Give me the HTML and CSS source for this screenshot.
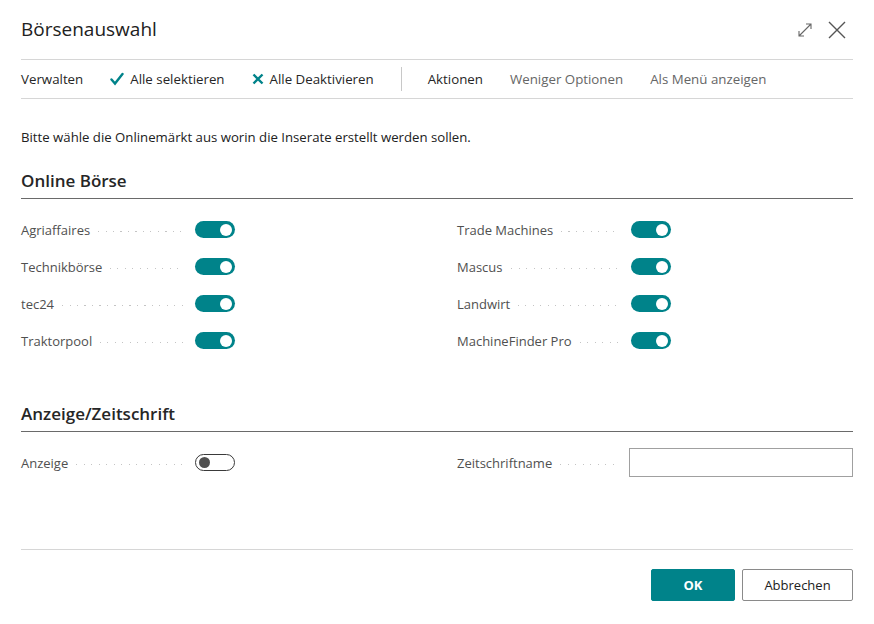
FILE: index.html
```html
<!DOCTYPE html>
<html lang="de">
<head>
<meta charset="utf-8">
<title>Börsenauswahl</title>
<link rel="stylesheet" href="styles.css">
</head>
<body>
<div class="dialog">
  <header class="head">
    <h1 class="title">Börsenauswahl</h1>
    <div class="head-icons">
      <svg class="ico-expand" width="16" height="16" viewBox="0 0 16 16" fill="none" stroke="#666" stroke-width="1.1">
        <path d="M2 14 L14 2 M9 2 H14 V7 M2 9 V14 H7"/>
      </svg>
      <svg class="ico-close" width="18" height="18" viewBox="0 0 18 18" fill="none" stroke="#555" stroke-width="1.4">
        <path d="M1 1 L17 17 M17 1 L1 17"/>
      </svg>
    </div>
  </header>

  <nav class="toolbar">
    <span class="tb-item">Verwalten</span>
    <span class="tb-item tb-icon">
      <svg width="14" height="14" viewBox="0 0 14 14" fill="none" stroke="#00838a" stroke-width="2.4" stroke-linecap="round"><path d="M1.5 7.5 L5 11.5 L12.5 2"/></svg>
      Alle selektieren
    </span>
    <span class="tb-item tb-icon">
      <svg width="12" height="12" viewBox="0 0 12 12" fill="none" stroke="#00838a" stroke-width="2.4"><path d="M1.5 1.5 L10.5 10.5 M10.5 1.5 L1.5 10.5"/></svg>
      Alle Deaktivieren
    </span>
    <span class="tb-sep"></span>
    <span class="tb-item">Aktionen</span>
    <span class="tb-item muted">Weniger Optionen</span>
    <span class="tb-item muted">Als Menü anzeigen</span>
  </nav>

  <p class="intro">Bitte wähle die Onlinemärkt aus worin die Inserate erstellt werden sollen.</p>

  <section class="group">
    <h2 class="group-title">Online Börse</h2>
    <div class="fields">
      <div class="col">
        <div class="field"><span class="label"><span class="lt">Agriaffaires</span><span class="leader"></span></span><span class="toggle on"></span></div>
        <div class="field"><span class="label"><span class="lt">Technikbörse</span><span class="leader"></span></span><span class="toggle on"></span></div>
        <div class="field"><span class="label"><span class="lt">tec24</span><span class="leader"></span></span><span class="toggle on"></span></div>
        <div class="field"><span class="label"><span class="lt">Traktorpool</span><span class="leader"></span></span><span class="toggle on"></span></div>
      </div>
      <div class="col">
        <div class="field"><span class="label"><span class="lt">Trade Machines</span><span class="leader"></span></span><span class="toggle on"></span></div>
        <div class="field"><span class="label"><span class="lt">Mascus</span><span class="leader"></span></span><span class="toggle on"></span></div>
        <div class="field"><span class="label"><span class="lt">Landwirt</span><span class="leader"></span></span><span class="toggle on"></span></div>
        <div class="field"><span class="label"><span class="lt">MachineFinder Pro</span><span class="leader"></span></span><span class="toggle on"></span></div>
      </div>
    </div>
  </section>

  <section class="group group2">
    <h2 class="group-title">Anzeige/Zeitschrift</h2>
    <div class="fields">
      <div class="col">
        <div class="field"><span class="label"><span class="lt">Anzeige</span><span class="leader"></span></span><span class="toggle off"></span></div>
      </div>
      <div class="col">
        <div class="field"><span class="label label-input"><span class="lt">Zeitschriftname</span><span class="leader"></span></span><input class="text-input" type="text"></div>
      </div>
    </div>
  </section>

  <footer class="foot">
    <button class="btn btn-primary">OK</button>
    <button class="btn">Abbrechen</button>
  </footer>
</div>
</body>
</html>
```

FILE: styles.css
```css
* { box-sizing: border-box; }
html, body { margin: 0; padding: 0; background: #fff; }
body {
  font-family: "Open Sans", "Noto Sans", sans-serif;
  color: #212121;
  width: 874px;
  height: 624px;
  overflow: hidden;
}
.dialog {
  padding: 0 21px;
  display: flex;
  flex-direction: column;
  height: 624px;
}
.head {
  display: flex;
  align-items: center;
  justify-content: space-between;
  height: 60px;
  border-bottom: 1px solid #d6d6d6;
}
.title {
  margin: 0;
  font-size: 19px;
  font-weight: 400;
  color: #212121;
  padding-bottom: 1px;
}
.head-icons {
  display: flex;
  align-items: center;
  gap: 15px;
  padding-right: 7px;
  padding-top: 1px;
}
.toolbar {
  display: flex;
  align-items: center;
  height: 39px;
  border-bottom: 1px solid #d6d6d6;
  font-size: 13.3px;
}
.tb-item { color: #262626; margin-right: 27px; white-space: nowrap; display: inline-flex; align-items: center; }
.tb-icon svg { margin-right: 6px; }
.tb-item.muted { color: #666; }
.tb-sep { width: 1px; height: 24px; background: #c8c8c8; margin: 0 26px 0 0; }
.intro {
  margin: 29px 0 0;
  font-size: 13.2px;
  color: #212121;
  line-height: 18px;
}
.group { margin-top: 23px; }
.group2 { margin-top: 43px; }
.group-title {
  margin: 0;
  font-size: 17px;
  font-weight: 600;
  color: #262626;
  padding-bottom: 5px;
  border-bottom: 1px solid #6a6a6a;
  line-height: 24px;
}
.fields {
  display: grid;
  grid-template-columns: 436px 1fr;
  padding-top: 12px;
}
.col { display: flex; flex-direction: column; }
.field {
  display: flex;
  align-items: center;
  height: 37px;
}
.label {
  width: 174px;
  display: flex;
  align-items: center;
  font-size: 13px;
  color: #505050;
  padding-right: 12px;
}
.label-input { width: 172px; }
.lt { white-space: nowrap; }
.leader {
  flex: 1;
  height: 1px;
  margin-left: 8px;
  margin-top: 3px;
  background-image: repeating-linear-gradient(90deg, #c4c4c4 0 1px, transparent 1px 7.5px);
}
.toggle {
  position: relative;
  width: 40px;
  height: 17px;
  border-radius: 9px;
  flex: none;
}
.toggle.on { background: #00838a; }
.toggle.on::after {
  content: "";
  position: absolute;
  right: 3px;
  top: 2.5px;
  width: 12px;
  height: 12px;
  border-radius: 50%;
  background: #fff;
}
.toggle.off { background: #fff; border: 1.5px solid #3a3a3a; }
.toggle.off::after {
  content: "";
  position: absolute;
  left: 2.5px;
  top: 1.5px;
  width: 11px;
  height: 11px;
  border-radius: 50%;
  background: #505050;
}
.text-input {
  width: 224px;
  height: 29px;
  border: 1px solid #a0a0a0;
  border-radius: 0;
  margin: 0;
  padding: 0 6px;
  font: inherit;
}
.foot {
  margin-top: auto;
  border-top: 1px solid #d6d6d6;
  height: 75px;
  display: flex;
  justify-content: flex-end;
  align-items: flex-start;
  padding-top: 19px;
  gap: 7px;
}
.btn {
  height: 32px;
  min-width: 84px;
  padding: 0 20px;
  font-family: "Open Sans", "Noto Sans", sans-serif;
  font-size: 13px;
  background: #fff;
  border: 1px solid #8a8a8a;
  border-radius: 2px;
  color: #212121;
}
.btn:last-child { width: 111px; }
.btn-primary {
  background: #00838a;
  border-color: #00838a;
  color: #fff;
  font-weight: 700;
}
```
